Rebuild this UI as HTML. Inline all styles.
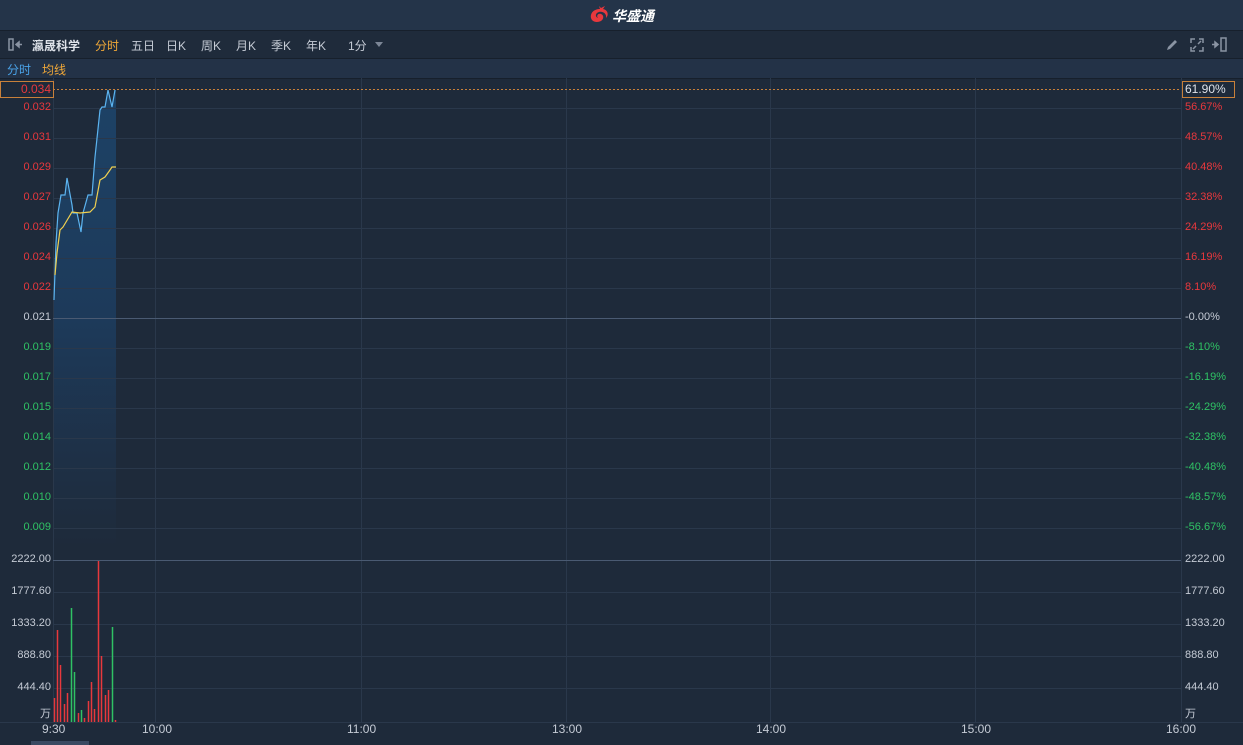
<!DOCTYPE html><html><head><meta charset="utf-8"><style>
body{margin:0;width:1243px;height:745px;background:#1e2a3a;font-family:"Liberation Sans","Noto Sans CJK SC",sans-serif;overflow:hidden;position:relative;color:#c5cbd5}
.a{position:absolute}
.top{left:0;top:0;width:1243px;height:30px;background:#243449;border-bottom:1px solid #17202c}
.tb{left:0;top:31px;width:1243px;height:27px;background:#1f2b3b;border-bottom:1px solid #17202c;font-size:12px}
.tb span{position:absolute;top:6px}
.sb{left:0;top:59px;width:1243px;height:19px;background:#233247;font-size:12px;border-bottom:1px solid #17202c}
.l{font-size:11px;text-align:right;width:51px;left:0}
.r{font-size:11px;left:1185px}
.red{color:#e8383d}.grn{color:#2fc264}
</style></head><body>
<div class="a top"></div>
<svg class="a" style="left:589px;top:6px" width="22" height="18" viewBox="0 0 22 18">
<path d="M11,3 C5,3 1,7 2,12 C3,16 8,17 12,15 C15,13 15,9 12,8 C9,7 7,10 9,12 C6,11 6,7 10,6 C14,5 18,8 17,12 C20,9 19,4 14,3 L16,0 L12,2 L10,0 Z" fill="#e8383d"/>
</svg>
<div class="a" style="left:612px;top:6px;font-size:14px;font-weight:bold;color:#fff;font-style:italic">华盛通</div>
<div class="a tb">
<svg class="a" style="left:8px;top:7px" width="16" height="13"><rect x="1" y="1" width="4" height="11" fill="none" stroke="#8a94a3" stroke-width="1.5"/><path d="M8,6.5H14M8,6.5L11,4V9Z" stroke="#8a94a3" fill="#8a94a3" stroke-width="1.5"/></svg>
<span style="left:32px;font-weight:bold;color:#dfe3ea">瀛晟科学</span>
<span style="left:95px;color:#f0a838">分时</span><span style="left:131px">五日</span><span style="left:166px">日K</span><span style="left:201px">周K</span><span style="left:236px">月K</span><span style="left:271px">季K</span><span style="left:306px">年K</span><span style="left:348px">1分</span>
<svg class="a" style="left:375px;top:11px" width="9" height="6"><path d="M0,0H8L4,5Z" fill="#7c8696"/></svg>
<svg class="a" style="left:1165px;top:7px" width="14" height="14"><path d="M2,12L3,9L10,2L12,4L5,11Z" fill="#8a94a3"/></svg>
<svg class="a" style="left:1190px;top:7px" width="14" height="14" fill="none" stroke="#8a94a3" stroke-width="1.5"><path d="M1,5V1H5M9,1H13V5M13,9V13H9M5,13H1V9M3,11L6,8M11,3L8,6"/></svg>
<svg class="a" style="left:1211px;top:6px" width="18" height="15"><path d="M1,7.5H7M7,7.5L4,5V10Z" stroke="#8a94a3" fill="#8a94a3" stroke-width="1.5"/><rect x="10" y="1" width="5" height="13" fill="none" stroke="#8a94a3" stroke-width="1.5"/></svg>
</div>
<div class="a sb"><span class="a" style="left:7px;top:2px;color:#4aa3e8">分时</span><span class="a" style="left:42px;top:2px;color:#f0a838">均线</span></div>
<svg class="a" style="left:0;top:78px" width="1243" height="667">
<defs><linearGradient id="g" x1="0" y1="0" x2="0" y2="1"><stop offset="0" stop-color="#1d4266"/><stop offset="0.5" stop-color="#1d3a5a"/><stop offset="1" stop-color="#1e2a3a"/></linearGradient></defs>
<g transform="translate(0,-78)">
<path d="M54,300L56,243L58,213L61,195L65,195L67,178L72,205L73,213L77,213L81,232L83,213L88,195L92,195L95,157L100,110L102,107L105,107L108,90L112,107L115,90L116,90L116,548L54,548Z" fill="url(#g)"/>
</g>
<g stroke="#2a384b" stroke-width="1">
<line x1="53.5" y1="0" x2="53.5" y2="645"/><line x1="1181.5" y1="0" x2="1181.5" y2="645"/>
<line x1="155.5" y1="0" x2="155.5" y2="645"/><line x1="361.5" y1="0" x2="361.5" y2="645"/><line x1="566.5" y1="0" x2="566.5" y2="645"/><line x1="770.5" y1="0" x2="770.5" y2="645"/><line x1="975.5" y1="0" x2="975.5" y2="645"/>
<path d="M53 30.5H1181M53 60.5H1181M53 90.5H1181M53 120.5H1181M53 150.5H1181M53 180.5H1181M53 210.5H1181M53 270.5H1181M53 300.5H1181M53 330.5H1181M53 360.5H1181M53 390.5H1181M53 420.5H1181M53 450.5H1181M53 514.5H1181M53 546.5H1181M53 578.5H1181M53 610.5H1181M0 644.5H1243"/>
</g>
<line x1="53" y1="240.5" x2="1181" y2="240.5" stroke="#4a5a72"/>
<line x1="53" y1="482.5" x2="1181" y2="482.5" stroke="#4a5a72"/>
<line x1="53" y1="11.5" x2="1181" y2="11.5" stroke="#c8803a" stroke-dasharray="2,2"/>
<g transform="translate(0,-78)">
<polyline points="54,300 56,243 58,213 61,195 65,195 67,178 72,205 73,213 77,213 81,232 83,213 88,195 92,195 95,157 100,110 102,107 105,107 108,90 112,107 115,90" fill="none" stroke="#5cb4f0" stroke-width="1.2"/>
<polyline points="55,275 57,253 60,230 63,227 72,212 80,213 90,212 95,207 100,180 105,177 110,170 112,167 116,167" fill="none" stroke="#f0d050" stroke-width="1.2"/>
<g stroke-width="1.5" stroke="#e8383d">
<path d="M54.5,722V698M57.5,722V630M60.5,722V665M64.5,722V704M67.5,722V693M78.5,722V713M84.5,722V718M88.5,722V701M91.5,722V682M94.5,722V709M98.5,722V561M101.5,722V656M105.5,722V695M108.5,722V690M115.5,722V720"/>
</g>
<g stroke-width="1.5" stroke="#2fc264"><path d="M71.5,722V608M74.5,722V672M81.5,722V710M112.5,722V627"/></g>
</g>
</svg>
<div class="a" style="left:0;top:81px;width:54px;height:17px;border:1px solid #c8803a;box-sizing:border-box;background:#1e2a3a"></div>
<div class="a l red" style="top:82px;font-size:12px">0.034</div>
<div class="a l red" style="top:101px">0.032</div><div class="a l red" style="top:131px">0.031</div><div class="a l red" style="top:161px">0.029</div><div class="a l red" style="top:191px">0.027</div><div class="a l red" style="top:221px">0.026</div><div class="a l red" style="top:251px">0.024</div><div class="a l red" style="top:281px">0.022</div>
<div class="a l" style="top:311px">0.021</div>
<div class="a l grn" style="top:341px">0.019</div><div class="a l grn" style="top:371px">0.017</div><div class="a l grn" style="top:401px">0.015</div><div class="a l grn" style="top:431px">0.014</div><div class="a l grn" style="top:461px">0.012</div><div class="a l grn" style="top:491px">0.010</div><div class="a l grn" style="top:521px">0.009</div>
<div class="a l" style="top:553px">2222.00</div><div class="a l" style="top:585px">1777.60</div><div class="a l" style="top:617px">1333.20</div><div class="a l" style="top:649px">888.80</div><div class="a l" style="top:681px">444.40</div><div class="a l" style="top:705px">万</div>
<div class="a" style="left:1182px;top:81px;width:53px;height:17px;border:1px solid #c8803a;box-sizing:border-box;background:#1e2a3a"></div>
<div class="a r" style="top:82px;font-size:12px;color:#dfe3ea">61.90%</div>
<div class="a r red" style="top:101px">56.67%</div><div class="a r red" style="top:131px">48.57%</div><div class="a r red" style="top:161px">40.48%</div><div class="a r red" style="top:191px">32.38%</div><div class="a r red" style="top:221px">24.29%</div><div class="a r red" style="top:251px">16.19%</div><div class="a r red" style="top:281px">8.10%</div>
<div class="a r" style="top:311px">-0.00%</div>
<div class="a r grn" style="top:341px">-8.10%</div><div class="a r grn" style="top:371px">-16.19%</div><div class="a r grn" style="top:401px">-24.29%</div><div class="a r grn" style="top:431px">-32.38%</div><div class="a r grn" style="top:461px">-40.48%</div><div class="a r grn" style="top:491px">-48.57%</div><div class="a r grn" style="top:521px">-56.67%</div>
<div class="a r" style="top:553px">2222.00</div><div class="a r" style="top:585px">1777.60</div><div class="a r" style="top:617px">1333.20</div><div class="a r" style="top:649px">888.80</div><div class="a r" style="top:681px">444.40</div><div class="a r" style="top:705px">万</div>
<div class="a" style="top:722px;font-size:12px;left:42px">9:30</div>
<div class="a" style="top:722px;font-size:12px;left:142px">10:00</div>
<div class="a" style="top:722px;font-size:12px;left:347px">11:00</div>
<div class="a" style="top:722px;font-size:12px;left:552px">13:00</div>
<div class="a" style="top:722px;font-size:12px;left:756px">14:00</div>
<div class="a" style="top:722px;font-size:12px;left:961px">15:00</div>
<div class="a" style="top:722px;font-size:12px;left:1166px">16:00</div>
<div class="a" style="left:31px;top:741px;width:58px;height:4px;background:#3a4a62"></div>
</body></html>
